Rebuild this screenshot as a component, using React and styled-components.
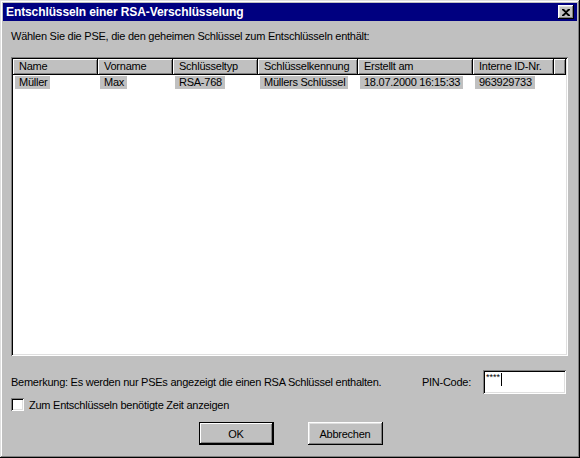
import React from 'react'
import styled, { createGlobalStyle } from 'styled-components'

const GlobalStyle = createGlobalStyle`
  html, body {
    margin: 0;
    padding: 0;
    background: #c0c0c0;
  }
  body {
    font-family: "Liberation Sans", Arial, sans-serif;
    font-size: 11px;
    letter-spacing: -0.25px;
    color: #000;
  }
`

const Window = styled.div`
  width: 580px;
  height: 458px;
  box-sizing: border-box;
  background: #c0c0c0;
  padding: 3px;
  display: flex;
  flex-direction: column;
  box-shadow: inset -1px -1px #000, inset 1px 1px #dfdfdf,
    inset -2px -2px #808080, inset 2px 2px #fff;
`

const TitleBar = styled.div`
  height: 18px;
  background: #000080;
  color: #fff;
  font-weight: bold;
  font-size: 12px;
  letter-spacing: -0.1px;
  display: flex;
  align-items: center;
  justify-content: space-between;
  padding: 0 3px 0 3px;
`

const CloseButton = styled.div`
  width: 16px;
  height: 14px;
  box-sizing: border-box;
  background: #c0c0c0;
  display: flex;
  align-items: center;
  justify-content: center;
  box-shadow: inset -1px -1px #000, inset 1px 1px #fff,
    inset -2px -2px #808080, inset 2px 2px #dfdfdf;
`

const Body = styled.div`
  flex: 1;
  display: flex;
  flex-direction: column;
  padding: 9px 9px 0 8px;
`

const Prompt = styled.div`
  line-height: 13px;
`

const ListBox = styled.div`
  margin-top: 14px;
  height: 299px;
  box-sizing: border-box;
  background: #fff;
  padding: 2px;
  box-shadow: inset 1px 1px #808080, inset -1px -1px #fff,
    inset 2px 2px #000, inset -2px -2px #dfdfdf;
  overflow: hidden;
`

const HeaderRow = styled.div`
  display: flex;
  height: 16px;
`

const HeaderCell = styled.div`
  width: ${({ w }) => w}px;
  flex: ${({ grow }) => (grow ? 1 : 'none')};
  box-sizing: border-box;
  background: #c0c0c0;
  padding: 1px 0 0 6px;
  line-height: 13px;
  white-space: nowrap;
  overflow: hidden;
  box-shadow: inset -1px -1px #000, inset 1px 1px #fff,
    inset -2px -2px #808080;
`

const DataRow = styled.div`
  display: flex;
  height: 15px;
  padding-top: 1px;
`

const DataCell = styled.div`
  width: ${({ w }) => w}px;
  flex: none;
  box-sizing: border-box;
  padding-left: 2px;
  white-space: nowrap;
`

const Selected = styled.span`
  display: inline-block;
  background: #c0c0c0;
  padding: 0 3px 0 4px;
  line-height: 13px;
`

const InfoRow = styled.div`
  display: flex;
  align-items: center;
  margin-top: 14px;
`

const Remark = styled.div`
  flex: 1;
`

const PinLabel = styled.div`
  margin-right: 12px;
`

const PinInput = styled.div`
  width: 83px;
  height: 24px;
  box-sizing: border-box;
  background: #fff;
  margin-right: 2px;
  padding: 3px 0 0 3px;
  display: flex;
  align-items: flex-start;
  box-shadow: inset 1px 1px #808080, inset -1px -1px #fff,
    inset 2px 2px #000, inset -2px -2px #dfdfdf;
`

const Stars = styled.span`
  font-size: 9px;
  line-height: 8px;
  letter-spacing: 0;
`

const Caret = styled.span`
  width: 1px;
  height: 13px;
  background: #000;
  margin-left: 1px;
`

const CheckRow = styled.label`
  display: flex;
  align-items: center;
  margin-top: 4px;
  gap: 5px;
`

const CheckBox = styled.span`
  width: 13px;
  height: 13px;
  box-sizing: border-box;
  background: #fff;
  box-shadow: inset 1px 1px #808080, inset -1px -1px #fff,
    inset 2px 2px #000, inset -2px -2px #dfdfdf;
`

const ButtonRow = styled.div`
  display: flex;
  justify-content: center;
  gap: 34px;
  margin-top: 11px;
  padding-left: 2px;
`

const Button = styled.div`
  width: 75px;
  height: 23px;
  box-sizing: border-box;
  background: #c0c0c0;
  display: flex;
  align-items: center;
  justify-content: center;
  box-shadow: ${({ primary }) =>
    primary
      ? 'inset 0 0 0 1px #000, inset -2px -2px #000, inset 2px 2px #fff, inset -3px -3px #808080'
      : 'inset -1px -1px #000, inset 1px 1px #fff, inset -2px -2px #808080, inset 2px 2px #dfdfdf'};
`

const columns = [
  { title: 'Name', w: 85, value: 'Müller' },
  { title: 'Vorname', w: 75, value: 'Max' },
  { title: 'Schlüsseltyp', w: 85, value: 'RSA-768' },
  { title: 'Schlüsselkennung', w: 100, value: 'Müllers Schlüssel' },
  { title: 'Erstellt am', w: 115, value: '18.07.2000 16:15:33' },
  { title: 'Interne ID-Nr.', w: 81, value: '963929733' },
]

const App = () => {
  return (
    <>
      <GlobalStyle />
      <Window>
        <TitleBar>
          <span>Entschlüsseln einer RSA-Verschlüsselung</span>
          <CloseButton>
            <svg width="8" height="7" viewBox="0 0 8 7">
              <path d="M0 0h2l2 2 2-2h2v1L5 3.5 8 6v1H6L4 5 2 7H0V6l3-2.5L0 1z" fill="#000" />
            </svg>
          </CloseButton>
        </TitleBar>
        <Body>
          <Prompt>Wählen Sie die PSE, die den geheimen Schlüssel zum Entschlüsseln enthält:</Prompt>
          <ListBox>
            <HeaderRow>
              {columns.map((c) => (
                <HeaderCell key={c.title} w={c.w}>{c.title}</HeaderCell>
              ))}
              <HeaderCell grow />
            </HeaderRow>
            <DataRow>
              {columns.map((c) => (
                <DataCell key={c.title} w={c.w}>
                  <Selected>{c.value}</Selected>
                </DataCell>
              ))}
            </DataRow>
          </ListBox>
          <InfoRow>
            <Remark>Bemerkung: Es werden nur PSEs angezeigt die einen RSA Schlüssel enthalten.</Remark>
            <PinLabel>PIN-Code:</PinLabel>
            <PinInput>
              <Stars>****</Stars>
              <Caret />
            </PinInput>
          </InfoRow>
          <CheckRow>
            <CheckBox />
            <span>Zum Entschlüsseln benötigte Zeit anzeigen</span>
          </CheckRow>
          <ButtonRow>
            <Button primary>OK</Button>
            <Button>Abbrechen</Button>
          </ButtonRow>
        </Body>
      </Window>
    </>
  )
}

export default App
